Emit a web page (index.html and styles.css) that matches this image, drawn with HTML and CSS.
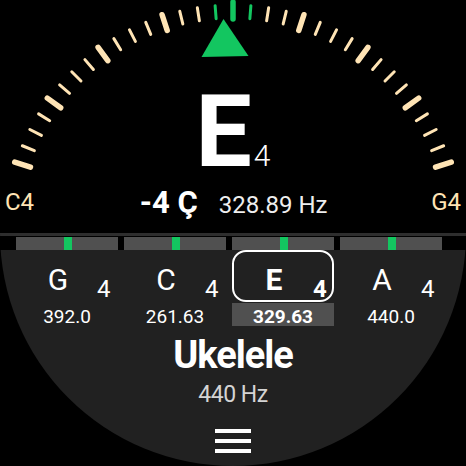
FILE: index.html
```html
<!DOCTYPE html>
<html lang="en">
<head>
<meta charset="utf-8">
<title>Tuner</title>
<link rel="stylesheet" href="styles.css">
</head>
<body>
<div class="watch">
  <svg class="dial-art" width="466" height="240" viewBox="0 0 466 240" aria-hidden="true">
    <g class="minor">
      <line x1="233" y1="5" x2="233" y2="18" transform="rotate(-67.5 233 233)"/>
      <line x1="233" y1="5" x2="233" y2="18" transform="rotate(-63 233 233)"/>
      <line x1="233" y1="5" x2="233" y2="18" transform="rotate(-58.5 233 233)"/>
      <line x1="233" y1="5" x2="233" y2="18" transform="rotate(-49.5 233 233)"/>
      <line x1="233" y1="5" x2="233" y2="18" transform="rotate(-45 233 233)"/>
      <line x1="233" y1="5" x2="233" y2="18" transform="rotate(-40.5 233 233)"/>
      <line x1="233" y1="5" x2="233" y2="18" transform="rotate(-31.5 233 233)"/>
      <line x1="233" y1="5" x2="233" y2="18" transform="rotate(-27 233 233)"/>
      <line x1="233" y1="5" x2="233" y2="18" transform="rotate(-22.5 233 233)"/>
      <line x1="233" y1="5" x2="233" y2="18" transform="rotate(-13.5 233 233)"/>
      <line x1="233" y1="5" x2="233" y2="18" transform="rotate(-9 233 233)"/>
      <line x1="233" y1="5" x2="233" y2="18" transform="rotate(9 233 233)"/>
      <line x1="233" y1="5" x2="233" y2="18" transform="rotate(13.5 233 233)"/>
      <line x1="233" y1="5" x2="233" y2="18" transform="rotate(22.5 233 233)"/>
      <line x1="233" y1="5" x2="233" y2="18" transform="rotate(27 233 233)"/>
      <line x1="233" y1="5" x2="233" y2="18" transform="rotate(31.5 233 233)"/>
      <line x1="233" y1="5" x2="233" y2="18" transform="rotate(40.5 233 233)"/>
      <line x1="233" y1="5" x2="233" y2="18" transform="rotate(45 233 233)"/>
      <line x1="233" y1="5" x2="233" y2="18" transform="rotate(49.5 233 233)"/>
      <line x1="233" y1="5" x2="233" y2="18" transform="rotate(58.5 233 233)"/>
      <line x1="233" y1="5" x2="233" y2="18" transform="rotate(63 233 233)"/>
      <line x1="233" y1="5" x2="233" y2="18" transform="rotate(67.5 233 233)"/>
    </g>
    <g class="major">
      <line x1="233" y1="3.5" x2="233" y2="20" transform="rotate(-72 233 233)"/>
      <line x1="233" y1="3.5" x2="233" y2="20" transform="rotate(-54 233 233)"/>
      <line x1="233" y1="3.5" x2="233" y2="20" transform="rotate(-36 233 233)"/>
      <line x1="233" y1="3.5" x2="233" y2="20" transform="rotate(-18 233 233)"/>
      <line x1="233" y1="3.5" x2="233" y2="20" transform="rotate(18 233 233)"/>
      <line x1="233" y1="3.5" x2="233" y2="20" transform="rotate(36 233 233)"/>
      <line x1="233" y1="3.5" x2="233" y2="20" transform="rotate(54 233 233)"/>
      <line x1="233" y1="3.5" x2="233" y2="20" transform="rotate(72 233 233)"/>
    </g>
    <g class="minor in-tune">
      <line x1="233" y1="5" x2="233" y2="18" transform="rotate(-4.5 233 233)"/>
      <line x1="233" y1="5" x2="233" y2="18" transform="rotate(4.5 233 233)"/>
    </g>
    <g class="major in-tune">
      <line x1="233" y1="2" x2="233" y2="19"/>
    </g>
    <polygon class="pointer" points="223.5,19 201.5,57 248.5,56"/>
  </svg>

  <section class="dial">
    <div class="note"><span class="note-name">E</span><span class="note-oct">4</span></div>
    <div class="readout">
      <span class="side">C4</span>
      <div class="center">
        <span class="cents">-4 Ç</span>
        <span class="hz">328.89 Hz</span>
      </div>
      <span class="side">G4</span>
    </div>
  </section>

  <div class="divider"></div>

  <div class="meters">
    <div class="meter"><span class="mark"></span></div>
    <div class="meter"><span class="mark"></span></div>
    <div class="meter"><span class="mark"></span></div>
    <div class="meter"><span class="mark"></span></div>
  </div>

  <section class="panel">
    <div class="strings">
      <div class="string">
        <div class="string-top"><span class="s-name">G</span><span class="s-oct">4</span></div>
        <div class="s-freq">392.0</div>
      </div>
      <div class="string">
        <div class="string-top"><span class="s-name">C</span><span class="s-oct">4</span></div>
        <div class="s-freq">261.63</div>
      </div>
      <div class="string selected">
        <div class="string-top"><span class="s-name">E</span><span class="s-oct">4</span></div>
        <div class="s-freq">329.63</div>
      </div>
      <div class="string">
        <div class="string-top"><span class="s-name">A</span><span class="s-oct">4</span></div>
        <div class="s-freq">440.0</div>
      </div>
    </div>
    <div class="instrument">Ukelele</div>
    <div class="ref">440 Hz</div>
    <div class="menu" role="button" aria-label="Menu"><span></span><span></span><span></span></div>
  </section>
</div>
</body>
</html>
```

FILE: styles.css
```css
* { box-sizing: border-box; }

html, body {
  margin: 0;
  padding: 0;
  background: #000;
}

body {
  width: 466px;
  height: 466px;
  overflow: hidden;
  font-family: Roboto, "Noto Sans", "DejaVu Sans", sans-serif;
  color: #fff;
}

.watch {
  position: relative;
  width: 466px;
  height: 466px;
  border-radius: 50%;
  overflow: hidden;
  background: #000;
  display: flex;
  flex-direction: column;
}

.dial-art {
  position: absolute;
  left: 0;
  top: 0;
}

.dial-art .minor line {
  stroke: #ffe4b5;
  stroke-width: 3;
  stroke-linecap: round;
}

.dial-art .major line {
  stroke: #ffe4b5;
  stroke-width: 5.5;
  stroke-linecap: round;
}

.dial-art .in-tune line {
  stroke: #13c660;
}

.dial-art .pointer {
  fill: #13c660;
}

.dial {
  position: relative;
  height: 233px;
  padding-top: 82px;
  display: flex;
  flex-direction: column;
}

.note {
  height: 100px;
  font-size: 100px;
  line-height: 100px;
  text-align: center;
  white-space: nowrap;
}

.note-name {
  font-weight: 700;
}

.note-oct {
  font-size: 30px;
  line-height: 30px;
  font-weight: 300;
  margin-left: 2px;
}

.readout {
  margin-top: 7px;
  display: flex;
  justify-content: space-between;
  align-items: flex-end;
  padding: 0 5px 0 5px;
}

.side {
  font-size: 24px;
  line-height: 24px;
  color: #ffe4b5;
  padding-bottom: 3px;
}

.center {
  display: flex;
  align-items: baseline;
  gap: 21px;
  padding-left: 2px;
}

.cents {
  font-size: 31px;
  line-height: 28px;
  font-weight: 700;
}

.hz {
  font-size: 24px;
  line-height: 24px;
  color: #eee;
}

.divider {
  height: 3px;
  background: #2e2e2e;
}

.meters {
  margin-top: 1px;
  height: 13px;
  padding-left: 16px;
  display: grid;
  grid-template-columns: repeat(4, 102px);
  column-gap: 6px;
}

.meter {
  background: #505050;
  display: flex;
}

.mark {
  width: 8px;
  margin-left: 48px;
  background: #13c660;
}

.panel {
  flex: 1;
  background: #212121;
  display: flex;
  flex-direction: column;
  align-items: center;
}

.strings {
  align-self: stretch;
  padding-left: 16px;
  display: grid;
  grid-template-columns: repeat(4, 102px);
  column-gap: 6px;
}

.string-top {
  height: 52px;
  border: 2px solid transparent;
  border-radius: 14px;
  display: grid;
  grid-template-columns: 80px 1fr;
  align-items: start;
}

.s-name {
  font-size: 30px;
  line-height: 30px;
  margin-top: 13px;
  text-align: center;
}

.s-oct {
  font-size: 24px;
  line-height: 24px;
  margin-top: 25px;
  margin-left: -1px;
}

.s-freq {
  margin-top: 1px;
  height: 23px;
  padding-top: 5px;
  font-size: 19px;
  line-height: 18px;
  text-align: center;
}

.selected .string-top {
  border-color: #fff;
}

.selected .s-name,
.selected .s-oct,
.selected .s-freq {
  font-weight: 700;
}

.selected .s-freq {
  background: #505050;
}

.instrument {
  margin-top: 10px;
  font-size: 38px;
  line-height: 38px;
  font-weight: 700;
  letter-spacing: -1px;
}

.ref {
  margin-top: 9px;
  font-size: 23px;
  line-height: 23px;
  color: #d4d4d4;
  letter-spacing: -0.5px;
}

.menu {
  margin-top: 23px;
  display: flex;
  flex-direction: column;
  gap: 6px;
}

.menu span {
  display: block;
  width: 36px;
  height: 4px;
  background: #fff;
}
```
